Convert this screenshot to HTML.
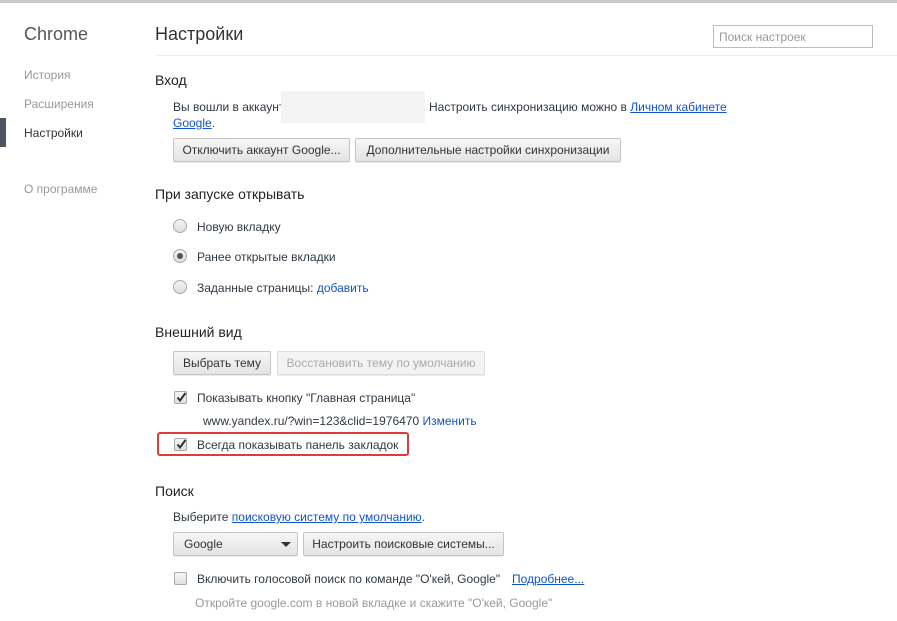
<!DOCTYPE html>
<html><head><meta charset="utf-8"><style>
body{margin:0;width:897px;height:621px;background:#fff;font-family:"Liberation Sans",sans-serif;font-size:12px;color:#303942;position:relative;overflow:hidden}
.a{position:absolute;white-space:nowrap;line-height:16px}
.g{color:#999}
a{color:#15c;text-decoration:underline}
.lk{color:#15c}
.btn{position:absolute;border:1px solid #c5c5c5;border-radius:2px;background:linear-gradient(#f6f6f6,#e4e4e4);box-shadow:0 1px 0 rgba(0,0,0,.08);line-height:22px;text-align:center;font-size:12px;color:#333;box-sizing:border-box;height:24px}
.h{position:absolute;font-size:14px;color:#222;white-space:nowrap}
.rad{position:absolute;width:14px;height:14px;border:1px solid #aaa;border-radius:50%;background:linear-gradient(#f4f4f4,#ddd);box-sizing:border-box}
.cb{position:absolute;width:13px;height:13px;border:1px solid #aaa;border-radius:2px;background:linear-gradient(#f6f6f6,#e0e0e0);box-sizing:border-box}
.cb svg{position:absolute;left:1px;top:0}
</style></head><body>
<div style="position:absolute;left:0;top:0;width:897px;height:3px;background:#c8c8c8"></div>
<div style="position:absolute;left:0;top:118px;width:6px;height:29px;background:#4e5560"></div>
<div class="a" style="left:24px;top:23px;font-size:18px;line-height:22px;color:#555">Chrome</div>
<div class="a g" style="left:24px;top:67px">История</div>
<div class="a g" style="left:24px;top:96px">Расширения</div>
<div class="a" style="left:24px;top:125px;color:#333">Настройки</div>
<div class="a g" style="left:24px;top:181px">О программе</div>
<div class="a" style="left:155px;top:23px;font-size:18px;line-height:22px;color:#333">Настройки</div>
<div style="position:absolute;left:155px;top:55px;width:742px;height:1px;background:#eee"></div>
<div style="position:absolute;left:713px;top:25px;width:160px;height:23px;border:1px solid #bbb;box-sizing:border-box"></div>
<div class="a g" style="left:719px;top:29px">Поиск настроек</div>

<div class="h" style="left:155px;top:72px">Вход</div>
<div class="a" style="left:173px;top:99px">Вы вошли в аккаунт</div>
<div style="position:absolute;left:281px;top:91px;width:144px;height:32px;background:#f3f3f3"></div>
<div class="a" style="left:429px;top:99px">Настроить синхронизацию можно в <a>Личном кабинете</a></div>
<div class="a" style="left:173px;top:115px"><a>Google</a>.</div>
<div class="btn" style="left:173px;top:138px;width:177px">Отключить аккаунт Google...</div>
<div class="btn" style="left:355px;top:138px;width:266px">Дополнительные настройки синхронизации</div>

<div class="h" style="left:155px;top:186px">При запуске открывать</div>
<div class="rad" style="left:173px;top:219px"></div><div class="a" style="left:197px;top:219px">Новую вкладку</div>
<div class="rad" style="left:173px;top:249px"></div><div style="position:absolute;left:177px;top:253px;width:6px;height:6px;border-radius:50%;background:#555"></div><div class="a" style="left:197px;top:249px">Ранее открытые вкладки</div>
<div class="rad" style="left:173px;top:280px"></div><div class="a" style="left:197px;top:280px">Заданные страницы: <span class="lk">добавить</span></div>

<div class="h" style="left:155px;top:324px">Внешний вид</div>
<div class="btn" style="left:173px;top:351px;width:98px">Выбрать тему</div>
<div class="btn" style="left:277px;top:351px;width:208px;color:#aaa;background:#f3f3f3;border-color:#ddd">Восстановить тему по умолчанию</div>
<div class="cb" style="left:174px;top:391px"><svg width="11" height="11" viewBox="0 0 11 11"><path d="M1.5 5.5 L4 8.5 L9.5 1" stroke="#333" stroke-width="2" fill="none"/></svg></div>
<div class="a" style="left:197px;top:390px">Показывать кнопку "Главная страница"</div>
<div class="a" style="left:203px;top:413px">www.yandex.ru/?win=123&amp;clid=1976470 <span class="lk">Изменить</span></div>
<div style="position:absolute;left:157px;top:432px;width:252px;height:24px;border:2px solid #e23a36;border-radius:3px;box-sizing:border-box"></div>
<div class="cb" style="left:174px;top:438px"><svg width="11" height="11" viewBox="0 0 11 11"><path d="M1.5 5.5 L4 8.5 L9.5 1" stroke="#333" stroke-width="2" fill="none"/></svg></div>
<div class="a" style="left:197px;top:437px">Всегда показывать панель закладок</div>

<div class="h" style="left:155px;top:483px">Поиск</div>
<div class="a" style="left:173px;top:509px">Выберите <a>поисковую систему по умолчанию</a>.</div>
<div class="btn" style="left:173px;top:532px;width:125px;text-align:left;padding-left:10px">Google<span style="position:absolute;right:6px;top:9px;border-left:5px solid transparent;border-right:5px solid transparent;border-top:5px solid #333"></span></div>
<div class="btn" style="left:303px;top:532px;width:201px">Настроить поисковые системы...</div>
<div class="cb" style="left:174px;top:572px"></div>
<div class="a" style="left:197px;top:571px">Включить голосовой поиск по команде "О'кей, Google"</div>
<div class="a" style="left:512px;top:571px"><a>Подробнее...</a></div>
<div class="a g" style="left:195px;top:595px">Откройте google.com в новой вкладке и скажите "О'кей, Google"</div>
</body></html>
